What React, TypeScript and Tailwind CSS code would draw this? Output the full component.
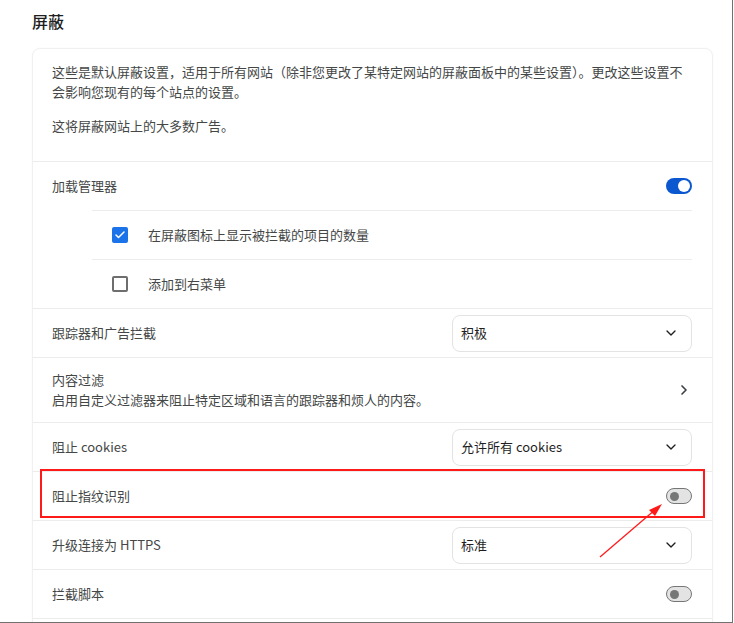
import { ChevronDown, ChevronRight, Check } from 'lucide-react';

const font = { fontFamily: '"Noto Sans CJK SC", "Noto Sans", sans-serif' };

function Toggle({ on }: { on: boolean }) {
    return on ? (
        <div className="w-[26px] h-[16px] rounded-full bg-[#0b57d0] flex items-center justify-end pr-[2px]">
            <div className="w-[12px] h-[12px] rounded-full bg-white" />
        </div>
    ) : (
        <div className="w-[26px] h-[16px] rounded-full bg-[#e3e3e3] border border-[#747775] flex items-center pl-[3px]">
            <div className="w-[9px] h-[9px] rounded-full bg-[#747775]" />
        </div>
    );
}

function Select({ value }: { value: string }) {
    return (
        <div className="w-[240px] h-[37px] rounded-lg border border-[#e3e3e3] flex items-center justify-between pl-[8px] pr-[12px] text-[13px] text-[#1f1f1f]">
            <span>{value}</span>
            <ChevronDown size={16} strokeWidth={2} className="text-[#1f1f1f]" />
        </div>
    );
}

function Row({ label, children }: { label: string; children?: React.ReactNode }) {
    return (
        <div className="h-[49px] border-t border-[#ececec] flex items-center justify-between pl-[19px] pr-5">
            <span className="text-[13px] text-[#444746]">{label}</span>
            {children}
        </div>
    );
}

export default function App() {
    return (
        <div className="relative w-[733px] h-[623px] overflow-hidden bg-white border-r border-b border-[#707070]" style={font}>
            <div className="pl-8 pr-[20px]">
                <h1 className="h-[48px] pt-[9px] text-[16px] font-medium text-[#1f1f1f]">屏蔽</h1>

                <div className="w-[681px] rounded-lg border border-[#f0f0f0] shadow-[0_0_2px_rgba(0,0,0,0.04)]">
                    <div className="pl-[19px] pr-[24px] pt-[13px] pb-[25px] text-[13px] leading-[20px] text-[#444746]">
                        <p className="mb-[14px]">
                            这些是默认屏蔽设置，适用于所有网站（除非您更改了某特定网站的屏蔽面板中的某些设置）。更改这些设置不会影响您现有的每个站点的设置。
                        </p>
                        <p>这将屏蔽网站上的大多数广告。</p>
                    </div>

                    <Row label="加载管理器">
                        <Toggle on />
                    </Row>

                    <div className="ml-[59px] mr-5">
                        <div className="h-[49px] border-t border-[#ececec] flex items-center gap-5 pl-5">
                            <div className="w-4 h-4 rounded-[2px] bg-[#1a73e8] flex items-center justify-center">
                                <Check size={12} strokeWidth={3} className="text-white" />
                            </div>
                            <span className="text-[13px] text-[#444746]">在屏蔽图标上显示被拦截的项目的数量</span>
                        </div>
                        <div className="h-[49px] border-t border-[#ececec] flex items-center gap-5 pl-5">
                            <div className="w-4 h-4 rounded-[2px] border-2 border-[#6e6e6e]" />
                            <span className="text-[13px] text-[#444746]">添加到右菜单</span>
                        </div>
                    </div>

                    <Row label="跟踪器和广告拦截">
                        <Select value="积极" />
                    </Row>

                    <div className="h-[65px] border-t border-[#ececec] flex items-center justify-between pl-[19px] pr-5">
                        <div className="text-[13px] leading-[20px] text-[#444746]">
                            <div>内容过滤</div>
                            <div>启用自定义过滤器来阻止特定区域和语言的跟踪器和烦人的内容。</div>
                        </div>
                        <ChevronRight size={16} strokeWidth={2.5} className="text-[#3c4043]" />
                    </div>

                    <Row label="阻止 cookies">
                        <Select value="允许所有 cookies" />
                    </Row>
                    <Row label="阻止指纹识别">
                        <Toggle on={false} />
                    </Row>
                    <Row label="升级连接为 HTTPS">
                        <Select value="标准" />
                    </Row>
                    <Row label="拦截脚本">
                        <Toggle on={false} />
                    </Row>
                    <div className="h-[20px] border-t border-[#ececec]" />
                </div>
            </div>

            {/* annotation */}
            <div className="absolute left-[40px] top-[469px] w-[665px] h-[49px] border-2 border-[#ff1a1a]" />
            <svg className="absolute left-0 top-0" width="734" height="623">
                <line x1="600" y1="557" x2="656" y2="509" stroke="#ff1a1a" strokeWidth="1.3" />
                <polygon points="662,504 649,510 655,516" fill="#ff1a1a" />
            </svg>
        </div>
    );
}
